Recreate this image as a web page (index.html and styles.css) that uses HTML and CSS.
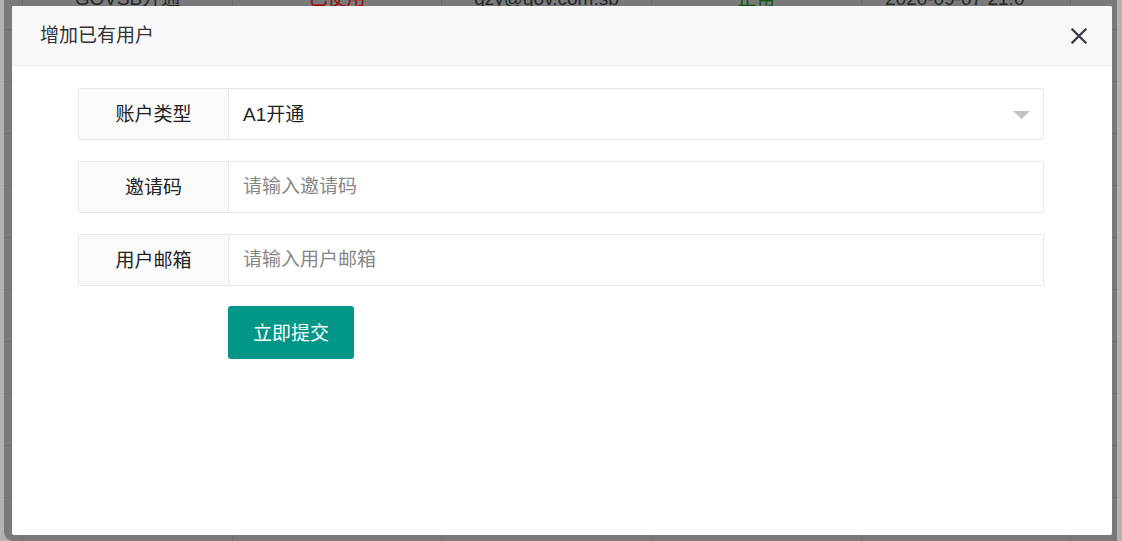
FILE: index.html
```html
<!DOCTYPE html>
<html lang="zh-CN">
<head>
<meta charset="utf-8">
<title>增加已有用户</title>
<link rel="stylesheet" href="styles.css">
</head>
<body>
<div class="page">
  <div class="grid">
    <div class="row first">
      <div class="cell c0"></div>
      <div class="cell c1">GOVSB开通</div>
      <div class="cell c2 red">已使用</div>
      <div class="cell c3">gzy@gov.com.sb</div>
      <div class="cell c4 green">正常</div>
      <div class="cell c5 left">2020-09-07 21:0</div>
      <div class="cell c6"></div>
    </div>
    <div class="row"><div class="cell c0"></div><div class="cell c1"></div><div class="cell c2"></div><div class="cell c3"></div><div class="cell c4"></div><div class="cell c5"></div><div class="cell c6"></div></div>
    <div class="row"><div class="cell c0"></div><div class="cell c1"></div><div class="cell c2"></div><div class="cell c3"></div><div class="cell c4"></div><div class="cell c5"></div><div class="cell c6"></div></div>
    <div class="row"><div class="cell c0"></div><div class="cell c1"></div><div class="cell c2"></div><div class="cell c3"></div><div class="cell c4"></div><div class="cell c5"></div><div class="cell c6"></div></div>
    <div class="row"><div class="cell c0"></div><div class="cell c1"></div><div class="cell c2"></div><div class="cell c3"></div><div class="cell c4"></div><div class="cell c5"></div><div class="cell c6"></div></div>
    <div class="row"><div class="cell c0"></div><div class="cell c1"></div><div class="cell c2"></div><div class="cell c3"></div><div class="cell c4"></div><div class="cell c5"></div><div class="cell c6"></div></div>
    <div class="row"><div class="cell c0"></div><div class="cell c1"></div><div class="cell c2"></div><div class="cell c3"></div><div class="cell c4"></div><div class="cell c5"></div><div class="cell c6"></div></div>
    <div class="row"><div class="cell c0"></div><div class="cell c1"></div><div class="cell c2"></div><div class="cell c3"></div><div class="cell c4"></div><div class="cell c5"></div><div class="cell c6"></div></div>
    <div class="row"><div class="cell c0"></div><div class="cell c1"></div><div class="cell c2"></div><div class="cell c3"></div><div class="cell c4"></div><div class="cell c5"></div><div class="cell c6"></div></div>
    <div class="row"><div class="cell c0"></div><div class="cell c1"></div><div class="cell c2"></div><div class="cell c3"></div><div class="cell c4"></div><div class="cell c5"></div><div class="cell c6"></div></div>
    <div class="row"><div class="cell c0"></div><div class="cell c1"></div><div class="cell c2"></div><div class="cell c3"></div><div class="cell c4"></div><div class="cell c5"></div><div class="cell c6"></div></div>
  </div>
</div>

<div class="modal">
  <div class="modal-header">
    <span class="modal-title">增加已有用户</span>
    <svg class="close" width="16" height="16" viewBox="0 0 16 16" aria-label="关闭">
      <path d="M1.5 1.5 L14.5 14.5 M14.5 1.5 L1.5 14.5" stroke="#3d3d4a" stroke-width="2.3" stroke-linecap="square" fill="none"/>
    </svg>
  </div>
  <div class="modal-body">
    <div class="form-list">
      <div class="form-item">
        <div class="label">账户类型</div>
        <div class="field select">
          <span class="value">A1开通</span>
          <svg class="arrow" width="17" height="8" viewBox="0 0 17 8"><polygon points="0,0 17,0 8.5,8" fill="#c2c2c2"/></svg>
        </div>
      </div>
      <div class="form-item">
        <div class="label">邀请码</div>
        <input class="field input" type="text" placeholder="请输入邀请码">
      </div>
      <div class="form-item">
        <div class="label">用户邮箱</div>
        <input class="field input" type="text" placeholder="请输入用户邮箱">
      </div>
    </div>
    <div class="actions">
      <button class="btn" type="button">立即提交</button>
    </div>
  </div>
</div>
</body>
</html>
```
FILE: styles.css
```css
html, body {
  margin: 0;
  padding: 0;
}
body {
  width: 1122px;
  height: 541px;
  overflow: hidden;
  background: #b2b2b2;
  font-family: "Liberation Sans", "Noto Sans CJK SC", sans-serif;
  font-size: 19px;
  color: #333;
  position: relative;
}
.page {
  margin: 0 5px 0 4px;
  height: 541px;
  background: #7a7a7a;
  overflow: hidden;
  border-bottom-left-radius: 9px;
}
.grid {
  margin-top: -22px;
}
.row {
  display: flex;
  height: 52px;
  box-sizing: border-box;
  border-bottom: 1px solid #6c6c6c;
}
.cell {
  box-sizing: border-box;
  border-right: 1px solid #6c6c6c;
  padding: 11px 0 0;
  line-height: 20px;
  text-align: center;
  white-space: nowrap;
  overflow: hidden;
  color: #262626;
}
.c0 { width: 19px; }
.c1 { width: 210px; }
.c2 { width: 209px; }
.c3 { width: 210px; }
.c4 { width: 210px; }
.c5 { width: 209px; }
.c6 { flex: 1; border-right: none; }
.cell.left { text-align: left; padding-left: 23px; }
.red { color: #9e0707; }
.green { color: #0d560d; }

.modal {
  position: absolute;
  left: 12px;
  top: 6px;
  width: 1100px;
  height: 529px;
  background: #fff;
  border-radius: 2px;
  display: flex;
  flex-direction: column;
}
.modal-header {
  height: 59px;
  border-bottom: 1px solid #eeeeee;
  background: #f8f8f8;
  border-radius: 2px 2px 0 0;
  display: flex;
  align-items: center;
  justify-content: space-between;
  padding: 0 25px 0 28px;
}
.modal-title {
  font-size: 19px;
  color: #333;
  line-height: 24px;
  margin-top: 1px;
}
.close {
  display: block;
  margin-top: 1px;
}
.modal-body {
  padding: 22px 68px 0 66px;
}
.form-list {
  display: flex;
  flex-direction: column;
  gap: 21px;
}
.form-item {
  display: flex;
  height: 52px;
}
.label {
  width: 151px;
  box-sizing: border-box;
  border: 1px solid #e6e6e6;
  border-radius: 2px 0 0 2px;
  background: #fafafa;
  display: flex;
  align-items: center;
  justify-content: center;
  padding-bottom: 4px;
  color: #222;
  font-size: 19px;
}
.field {
  flex: 1;
  min-width: 0;
  box-sizing: border-box;
  border: 1px solid #e6e6e6;
  border-left: none;
  border-radius: 0 2px 2px 0;
  background: #fff;
  padding: 0 14px;
  font-family: inherit;
  font-size: 19px;
  color: #222;
  height: 52px;
  margin: 0;
  outline: none;
}
.select {
  display: flex;
  align-items: center;
  justify-content: space-between;
  padding-right: 13px;
}
.value {
  margin-top: -4px;
}
.arrow {
  display: block;
  margin-top: 1px;
}
.input::placeholder {
  color: #868686;
}
.actions {
  padding: 20px 0 0 150px;
}
.btn {
  height: 53px;
  padding: 0 25px 3px;
  border: none;
  border-radius: 3px;
  background: #009688;
  color: #fff;
  font-family: inherit;
  font-size: 19px;
  cursor: pointer;
}
```
